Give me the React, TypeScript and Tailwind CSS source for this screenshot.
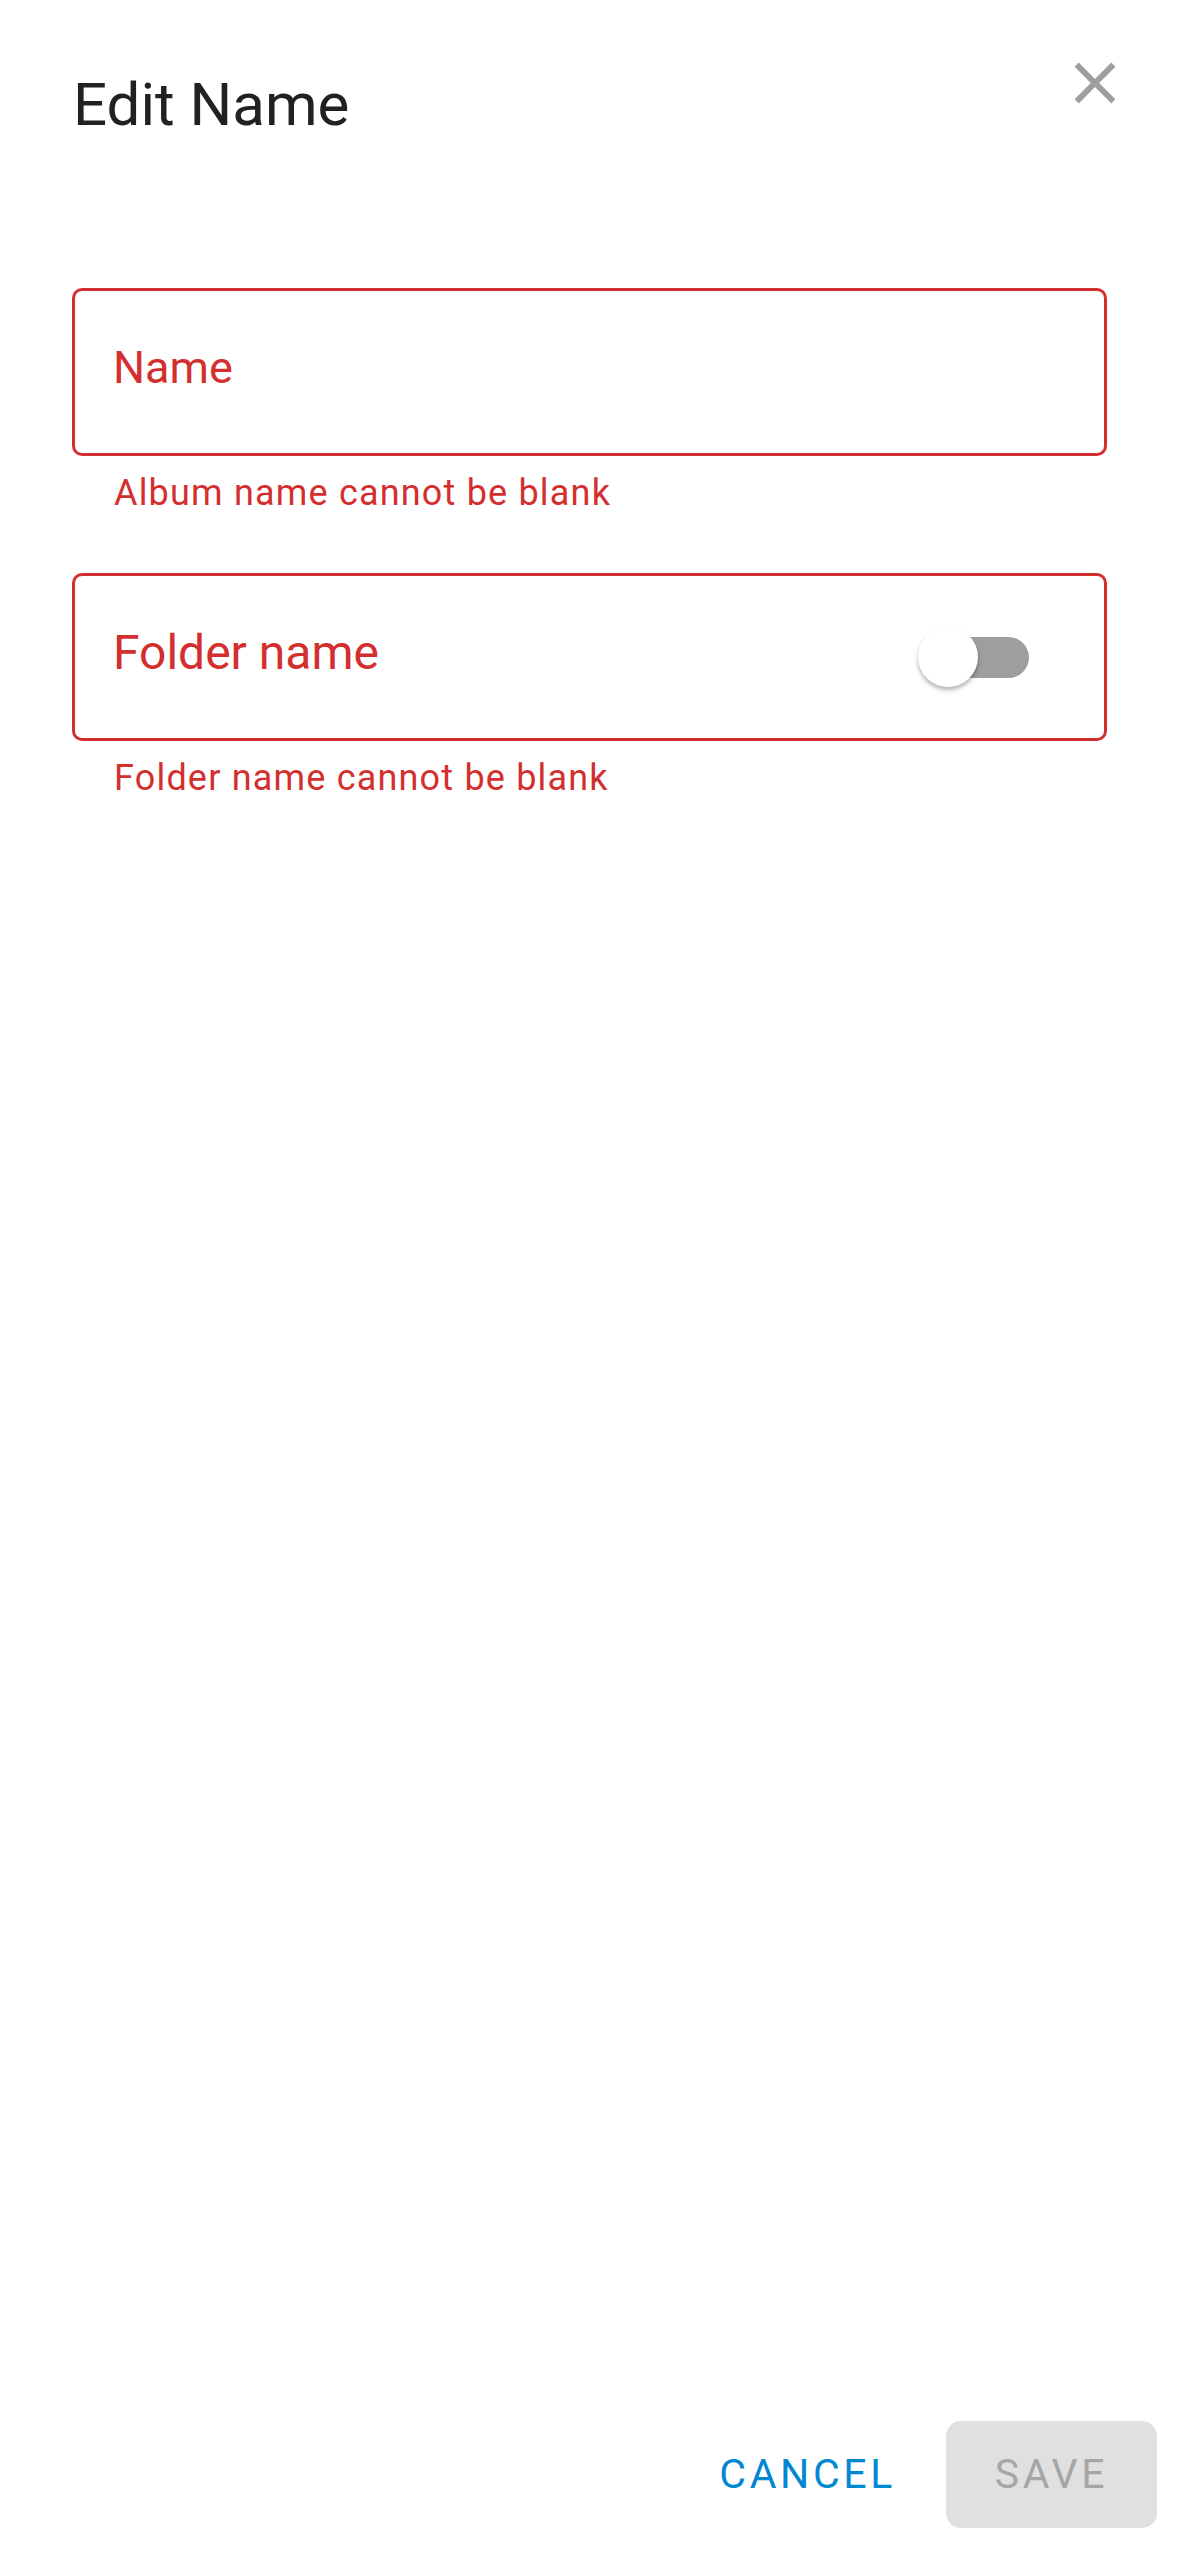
import { useState } from "react";

const font = { fontFamily: "Roboto, 'Noto Sans', sans-serif" };

function CloseIcon() {
  return (
    <svg viewBox="0 0 24 24" className="w-[70px] h-[70px]" fill="#9e9e9e">
      <path d="M19 6.41L17.59 5 12 10.59 6.41 5 5 6.41 10.59 12 5 17.59 6.41 19 12 13.41 17.59 19 19 17.59 13.41 12z" />
    </svg>
  );
}

function Switch({ on, onToggle }: { on: boolean; onToggle: () => void }) {
  return (
    <button
      type="button"
      onClick={onToggle}
      className="relative mt-[8px] w-[101px] h-[41px] rounded-full bg-[#9e9e9e]"
    >
      <span
        className={`absolute top-1/2 -translate-y-1/2 w-[60px] h-[60px] rounded-full bg-white shadow-[0_3px_4px_rgba(0,0,0,0.3)] ${
          on ? "left-[50px]" : "-left-[10px]"
        }`}
      />
    </button>
  );
}

function Field({
  label,
  error,
  labelClass,
  children,
  className = "",
}: {
  label: string;
  error: string;
  labelClass: string;
  children?: React.ReactNode;
  className?: string;
}) {
  return (
    <div className={className}>
      <div className="mx-[72px] h-[168px] border-[3px] border-[#d32f2f] rounded-[10px] flex items-center justify-between pl-[38px] pr-[75px] pb-[8px]">
        <span className={`text-[#d32f2f] ${labelClass}`}>{label}</span>
        {children}
      </div>
      <p className="mt-[17px] ml-[114px] text-[36px] leading-[41px] tracking-[0.033em] text-[#d32f2f]">
        {error}
      </p>
    </div>
  );
}

export default function App() {
  const [folderOn, setFolderOn] = useState(false);

  return (
    <div className="min-h-screen flex flex-col bg-white" style={font}>
      {/* Header */}
      <div className="flex items-start justify-between pl-[73px] pr-[49px] pt-[48px]">
        <h1 className="mt-[23px] text-[60px] leading-[67px] font-normal text-[#212121]">
          Edit Name
        </h1>
        <button type="button" aria-label="Close">
          <CloseIcon />
        </button>
      </div>

      {/* Fields */}
      <Field
        className="mt-[150px]"
        label="Name"
        labelClass="text-[45px] leading-[52px]"
        error="Album name cannot be blank"
      />
      <Field
        className="mt-[59px]"
        label="Folder name"
        labelClass="text-[48px] leading-[56px]"
        error="Folder name cannot be blank"
      >
        <Switch on={folderOn} onToggle={() => setFolderOn(!folderOn)} />
      </Field>

      <div className="flex-1" />

      {/* Actions */}
      <div className="flex items-center justify-end pr-[22px] pb-[25px]">
        <button
          type="button"
          className="h-[107px] px-[50px] text-[41px] tracking-[0.089em] text-[#0288d1]"
        >
          CANCEL
        </button>
        <button
          type="button"
          disabled
          className="h-[107px] w-[211px] rounded-[15px] bg-[#e0e0e0] text-[41px] tracking-[0.089em] text-[#a6a6a6]"
        >
          SAVE
        </button>
      </div>
    </div>
  );
}
